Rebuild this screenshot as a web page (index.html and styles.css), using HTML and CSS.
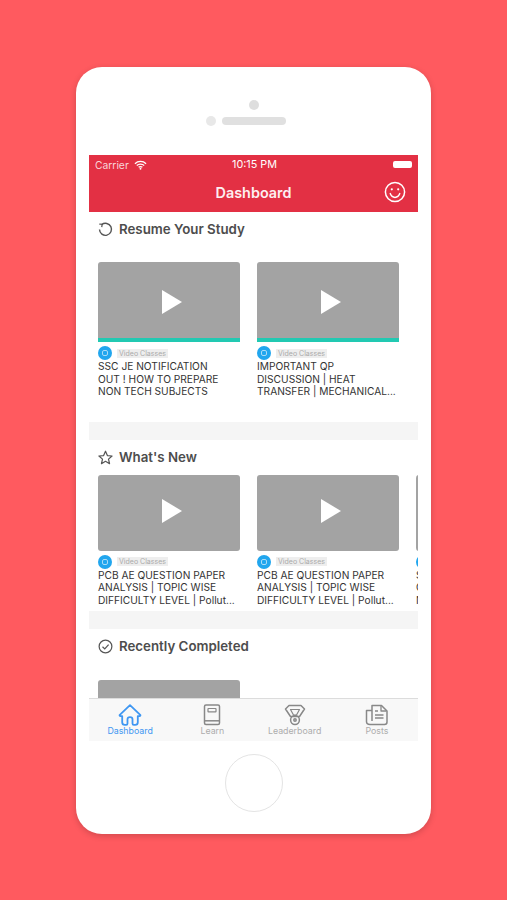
FILE: index.html
```html
<!DOCTYPE html>
<html lang="en">
<head>
    <meta charset="UTF-8">
    <meta name="viewport" content="width=device-width, initial-scale=1.0">
    <title>Dashboard</title>
    <link rel="stylesheet" href="styles.css">
</head>
<body>
    <div class="phone">
        <div class="phone-top">
            <div class="camera"></div>
            <div class="speaker-row">
                <div class="sensor"></div>
                <div class="speaker"></div>
            </div>
        </div>

        <div class="screen">
            <div class="header">
                <div class="status">
                    <div class="status-left">
                        <span>Carrier</span>
                        <svg class="wifi" viewBox="0 0 14 10"><path d="M1 3.6a8.6 8.6 0 0 1 12 0M3 5.6a5.7 5.7 0 0 1 8 0M5 7.5a2.8 2.8 0 0 1 4 0" fill="none" stroke="#fff" stroke-width="1.4"/><circle cx="7" cy="9" r="1" fill="#fff"/></svg>
                    </div>
                    <span class="clock">10:15 PM</span>
                    <div class="battery"></div>
                </div>
                <div class="nav">
                    <span class="nav-title">Dashboard</span>
                    <svg class="smile" viewBox="0 0 22 22" fill="none" stroke="#fff" stroke-width="1.5"><circle cx="11" cy="11" r="9.6"/><path d="M6.2 12.6c1 2.6 2.800 3.800 4.800 3.800s3.800-1.200 4.800-3.800" stroke-linecap="round"/><circle cx="7.800" cy="8.300" r="1.100" fill="#fff" stroke="none"/><circle cx="14.200" cy="8.300" r="1.100" fill="#fff" stroke="none"/></svg>
                </div>
            </div>

            <div class="content">
                <section class="section resume">
                    <h2 class="section-head">
                        <svg viewBox="0 0 16 16" fill="none" stroke="#555" stroke-width="1.500"><path d="M4 2.800A6.400 6.400 0 1 1 1.600 8"/><path d="M1.400 2.200 4.400 2.400 4 5.400" stroke-width="1.300"/></svg>
                        Resume Your Study
                    </h2>
                    <div class="cards">
                        <div class="card">
                            <div class="thumb tall progress"><div class="play"></div></div>
                            <div class="meta"><span class="badge"><i></i></span><span class="tag">Video Classes</span></div>
                            <p class="card-title">SSC JE NOTIFICATION<br>OUT ! HOW TO PREPARE<br>NON TECH SUBJECTS</p>
                        </div>
                        <div class="card">
                            <div class="thumb tall progress"><div class="play"></div></div>
                            <div class="meta"><span class="badge"><i></i></span><span class="tag">Video Classes</span></div>
                            <p class="card-title">IMPORTANT QP<br>DISCUSSION | HEAT<br>TRANSFER | MECHANICAL...</p>
                        </div>
                    </div>
                </section>

                <div class="band"></div>

                <section class="section whatsnew">
                    <h2 class="section-head">
                        <svg viewBox="0 0 16 16" fill="none" stroke="#555" stroke-width="1.300" stroke-linejoin="round"><path d="M8 1.300 10 5.900l5 .5-3.800 3.300 1.100 4.900L8 12.100l-4.300 2.500 1.100-4.900L1 6.400l5-.5z"/></svg>
                        What's New
                    </h2>
                    <div class="cards">
                        <div class="card">
                            <div class="thumb"><div class="play"></div></div>
                            <div class="meta"><span class="badge"><i></i></span><span class="tag">Video Classes</span></div>
                            <p class="card-title">PCB AE QUESTION PAPER<br>ANALYSIS | TOPIC WISE<br>DIFFICULTY LEVEL | Pollut...</p>
                        </div>
                        <div class="card">
                            <div class="thumb"><div class="play"></div></div>
                            <div class="meta"><span class="badge"><i></i></span><span class="tag">Video Classes</span></div>
                            <p class="card-title">PCB AE QUESTION PAPER<br>ANALYSIS | TOPIC WISE<br>DIFFICULTY LEVEL | Pollut...</p>
                        </div>
                        <div class="card">
                            <div class="thumb"><div class="play"></div></div>
                            <div class="meta"><span class="badge"><i></i></span><span class="tag">Video Classes</span></div>
                            <p class="card-title">SSC JE<br>CIVIL<br>NOTES</p>
                        </div>
                    </div>
                </section>

                <div class="band"></div>

                <section class="section recent">
                    <h2 class="section-head">
                        <svg viewBox="0 0 16 16" fill="none" stroke="#555" stroke-width="1.300"><circle cx="8" cy="8" r="6.800"/><path d="M4.800 8.200 7.200 10.500 11.300 5.900"/></svg>
                        Recently Completed
                    </h2>
                    <div class="cards">
                        <div class="card">
                            <div class="thumb"></div>
                        </div>
                    </div>
                </section>
            </div>

            <div class="tabbar">
                <div class="tab active">
                    <svg viewBox="0 0 24 22" fill="none" stroke="#3f97f2" stroke-width="1.800" stroke-linejoin="round"><path d="M12 1.200 1.800 10.800c-.5.600-.1 1.300.6 1.300h1.800v6.100c0 1.500 1.100 2.600 2.600 2.600h1.400c.8 0 1.300-.5 1.300-1.300v-4.200c0-3 5-3 5 0v4.200c0 .8.500 1.300 1.300 1.300h1.400c1.500 0 2.600-1.100 2.600-2.600v-6.100h1.800c.7 0 1.100-.7.600-1.300z"/></svg>
                    <span>Dashboard</span>
                </div>
                <div class="tab">
                    <svg viewBox="0 0 24 22" fill="none" stroke="#888" stroke-width="1.500"><rect x="4.500" y="1" width="15" height="19.500" rx="1.500"/><path d="M4.500 16.800h15"/><rect x="8" y="4.500" width="8" height="3.400" rx=".5" stroke-width="1.200"/></svg>
                    <span>Learn</span>
                </div>
                <div class="tab">
                    <svg viewBox="0 0 24 22" fill="none" stroke="#888" stroke-width="1.500" stroke-linejoin="round"><path d="M6 1.500h12l3.500 3.500-5 7.500h-9L2.500 5z"/><path d="M7.500 5.500h9L13.500 11h-3z" stroke-width="1.200"/><circle cx="12" cy="16" r="4.400"/><circle cx="12" cy="16" r="1.200"/></svg>
                    <span>Leaderboard</span>
                </div>
                <div class="tab">
                    <svg viewBox="0 0 24 22" fill="none" stroke="#888" stroke-width="1.500" stroke-linejoin="round"><path d="M7 17V1.500h9.500l5.500 5.500v11c0 1.500-1 2.500-2.500 2.500H5C3 20.500 1.500 19.500 1.500 17.500V6.500H7"/><path d="M16 1.800v5.200h5.500M10 7h3M10 11h8.500M10 14h8.500" stroke-width="1.300"/></svg>
                    <span>Posts</span>
                </div>
            </div>
        </div>

        <div class="phone-bottom">
            <div class="home-button"></div>
        </div>
    </div>
</body>
</html>
```

FILE: styles.css
```css
html, body {
    margin: 0;
    padding: 0;
}
body {
    width: 507px;
    height: 900px;
    overflow: hidden;
    background-color: #ff5a5f;
    font-family: Inter, "Liberation Sans", Arial, sans-serif;
    padding-top: 67px;
    box-sizing: border-box;
}
.phone {
    width: 355px;
    height: 767px;
    margin-left: 76px;
    background-color: white;
    border-radius: 26px;
    box-shadow: 0 2px 6px rgba(0, 0, 0, 0.18);
    display: flex;
    flex-direction: column;
    align-items: center;
}
.phone-top {
    height: 88px;
    width: 100%;
    display: flex;
    flex-direction: column;
    align-items: center;
    padding-top: 33px;
    box-sizing: border-box;
    gap: 6px;
}
.camera {
    width: 10px;
    height: 10px;
    border-radius: 50%;
    background-color: #dedede;
}
.speaker-row {
    display: flex;
    align-items: center;
    gap: 6px;
    padding-right: 16px;
}
.sensor {
    width: 10px;
    height: 10px;
    border-radius: 50%;
    background-color: #e8e8e8;
}
.speaker {
    width: 64px;
    height: 8px;
    border-radius: 4px;
    background-color: #e0e0e0;
}

/* screen */
.screen {
    width: 329px;
    height: 586px;
    display: flex;
    flex-direction: column;
    overflow: hidden;
    background-color: white;
}
.header {
    height: 57px;
    background-color: #e33044;
    color: white;
    flex-shrink: 0;
}
.status {
    height: 19px;
    display: flex;
    justify-content: space-between;
    align-items: center;
    padding: 0 6px;
    font-size: 10.300px;
    position: relative;
    color: #f9d5d9;
}
.status-left {
    display: flex;
    align-items: center;
    gap: 5px;
}
.wifi {
    width: 13px;
    height: 10px;
}
.clock {
    position: absolute;
    left: 2px;
    right: 0;
    text-align: center;
    font-size: 10.800px;
    color: white;
}
.battery {
    width: 19px;
    height: 7px;
    border-radius: 2px;
    background-color: white;
}
.nav {
    height: 37px;
    display: flex;
    align-items: center;
    justify-content: center;
    position: relative;
}
.nav-title {
    font-size: 14.400px;
    font-weight: 600;
    color: #fdeef0;
}
.smile {
    position: absolute;
    right: 12px;
    top: 7px;
    width: 22px;
    height: 22px;
}

/* scrolling part */
.content {
    flex: 1;
    overflow: hidden;
}
.section {
    padding-left: 9px;
}
.section-head {
    margin: 0;
    display: flex;
    align-items: center;
    gap: 6px;
    font-size: 13.300px;
    font-weight: 600;
    color: #4d4d4d;
}
.section-head svg {
    width: 15px;
    height: 15px;
}
.cards {
    display: flex;
    gap: 17px;
}
.card {
    width: 142px;
    flex-shrink: 0;
}
.thumb {
    height: 76px;
    background-color: #a3a3a3;
    border-radius: 3px;
    display: flex;
    align-items: center;
    justify-content: center;
    box-sizing: border-box;
}
.thumb.tall {
    height: 80px;
}
.thumb.progress {
    border-bottom: 4px solid #22c9b2;
    border-radius: 3px 3px 0 0;
}
.play {
    width: 0;
    height: 0;
    margin: -4px 0 0 5px;
    border-left: 20px solid white;
    border-top: 12px solid transparent;
    border-bottom: 12px solid transparent;
}
.thumb.tall .play {
    margin-top: 4px;
}
.meta {
    display: flex;
    align-items: center;
    gap: 5px;
    height: 14px;
    margin-top: 4px;
}
.badge {
    width: 14px;
    height: 14px;
    border-radius: 50%;
    background-color: #21a6ee;
    display: flex;
    align-items: center;
    justify-content: center;
}
.badge i {
    width: 6px;
    height: 6px;
    border: 1px solid #a9dcf8;
    border-radius: 2px;
    box-sizing: border-box;
}
.tag {
    background-color: #eeeeee;
    color: #aaaaaa;
    font-size: 7px;
    line-height: 9px;
    padding: 0 2px;
}
.card-title {
    margin: 0;
    font-size: 10.200px;
    line-height: 12.500px;
    color: #333;
    white-space: nowrap;
}
.band {
    height: 18px;
    background-color: #f5f5f5;
}
.resume .section-head {
    height: 34px;
}
.resume .cards {
    margin-top: 16px;
}
.resume {
    padding-bottom: 24px;
}
.whatsnew .section-head {
    height: 35px;
}
.whatsnew {
    padding-bottom: 5px;
}
.recent .section-head {
    height: 34px;
}
.recent .cards {
    margin-top: 17px;
}

/* tabs */
.tabbar {
    height: 43px;
    flex-shrink: 0;
    display: grid;
    grid-template-columns: repeat(4, 1fr);
    background-color: #f8f8f8;
    border-top: 1px solid #dcdcdc;
    box-sizing: border-box;
}
.tab {
    display: flex;
    flex-direction: column;
    align-items: center;
    padding-top: 5px;
    font-size: 8.800px;
    color: #adadad;
}
.tab svg {
    width: 24px;
    height: 22px;
}
.tab span {
    line-height: 10px;
}
.tab.active {
    color: #3f97f2;
}

.phone-bottom {
    flex: 1;
    width: 100%;
    display: flex;
    justify-content: center;
    padding-top: 13px;
    box-sizing: border-box;
}
.home-button {
    width: 58px;
    height: 58px;
    border: 1.500px solid #e4e4e4;
    border-radius: 50%;
    box-sizing: border-box;
}
```
